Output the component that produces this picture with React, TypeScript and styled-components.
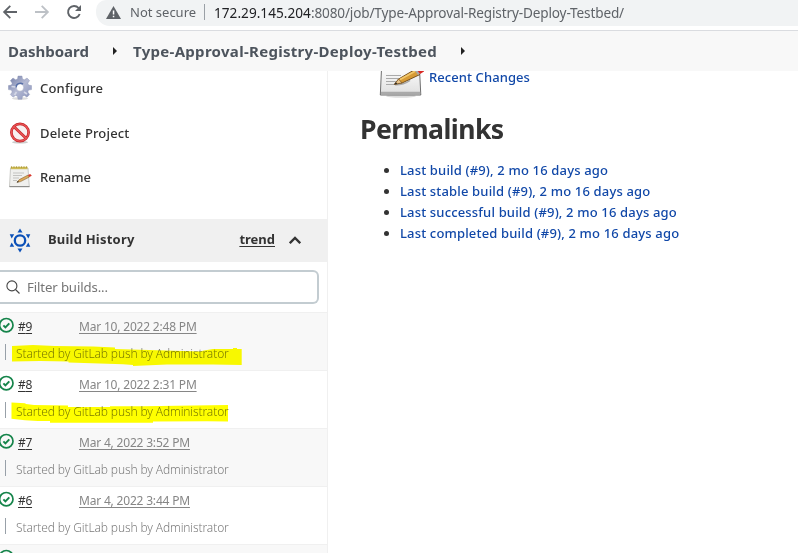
import React from 'react';
import styled, { createGlobalStyle } from 'styled-components';

const GlobalStyle = createGlobalStyle`
  * { box-sizing: border-box; }
  html, body { margin: 0; padding: 0; }
  body {
    background: #fff;
    color: #333;
    font-family: "Noto Sans", "Open Sans", sans-serif;
    font-size: 13px;
    overflow: hidden;
  }
  svg { display: block; flex: none; }
`;

const Page = styled.div`
  display: flex;
  flex-direction: column;
  width: 798px;
  height: 553px;
  overflow: hidden;
`;

const BrowserBar = styled.header`
  display: flex;
  flex: none;
  height: 31px;
  border-bottom: 1px solid #dadce0;
  background: #fff;
`;

const NavButtons = styled.div`
  display: flex;
  width: 96px;
  height: 24px;
  align-items: center;
  gap: 14px;
  padding-left: 1px;
`;

const AddressBar = styled.div`
  display: flex;
  flex: 1;
  height: 26px;
  padding: 0 0 2px 10px;
  align-items: center;
  border-radius: 10px 0 0 14px;
  background: #f1f3f4;
  color: #5f6368;
  white-space: pre;
`;

const Security = styled.span`
  width: 74px;
  margin-left: 9px;
  font-size: 13px;
`;

const Divider = styled.span`
  width: 1px;
  height: 16px;
  margin-right: 9px;
  background: #9aa0a6;
`;

const Url = styled.span`
  font-size: 13.6px;
  letter-spacing: -0.15px;
`;

const Host = styled.span`
  color: #202124;
  letter-spacing: 0.03px;
`;

const Breadcrumbs = styled.nav`
  display: flex;
  flex: none;
  align-items: center;
  height: 40px;
  padding-left: 8px;
  background: #f8f8f8;
  color: #4d545d;
  font-size: 15px;
  font-weight: 700;
`;

const Crumb = styled.span<{ $width: number; $spacing?: number }>`
  width: ${(p) => p.$width}px;
  letter-spacing: ${(p) => p.$spacing ?? 0}px;
  white-space: nowrap;
`;

const CrumbArrow = styled.svg`
  width: 4px;
  height: 8px;
  margin-right: 16px;
`;

const Body = styled.div`
  display: flex;
  flex: 1;
  min-height: 0;
`;

const SidePanel = styled.aside`
  width: 328px;
  flex: none;
  border-right: 1px solid #f0f0f0;
  overflow: hidden;
`;

const Tasks = styled.div`
  display: flex;
  flex-direction: column;
  height: 148px;
  padding: 5px 0 0 8px;
  gap: 20.5px;
`;

const Task = styled.a`
  display: flex;
  align-items: center;
  height: 24px;
  gap: 8px;
  font-weight: 500;
`;

const TaskLabel = styled.span<{ $spacing: number }>`
  letter-spacing: ${(p) => p.$spacing}px;
`;

const HistoryHeader = styled.div`
  display: flex;
  align-items: center;
  height: 43px;
  padding: 0 26px 2px 8px;
  background: #f0f0f0;
  font-weight: 700;
`;

const HistoryTitle = styled.span`
  flex: 1;
  margin-left: 16px;
  padding-bottom: 2px;
  letter-spacing: 0.21px;
`;

const TrendLink = styled.a`
  margin-right: 14px;
  padding-bottom: 2px;
  text-decoration: underline;
  text-underline-offset: 2px;
`;

const FilterArea = styled.div`
  height: 50px;
  padding: 8px 8px 8px 0;
`;

const FilterBox = styled.div`
  display: flex;
  align-items: center;
  height: 34px;
  padding-left: 6px;
  border: 2px solid #c3ccd1;
  border-left: 0;
  border-radius: 0 6px 6px 0;
  color: #757575;
`;

const Placeholder = styled.span`
  margin-left: 7px;
  font-size: 13.2px;
  letter-spacing: -0.12px;
`;

const BuildRow = styled.div<{ $shaded: boolean }>`
  position: relative;
  height: 58px;
  padding-top: 6px;
  border-top: 1px solid #f0f0f0;
  background: ${(p) => (p.$shaded ? '#f8f8f8' : '#fff')};
  font-size: 12px;
`;

const BuildLine = styled.div`
  display: flex;
  height: 16px;
  line-height: 16px;
`;

const StatusIcon = styled.svg`
  width: 16px;
  height: 16px;
  margin: -2px 4px 0 -2px;
`;

const BuildLink = styled.a`
  width: 61px;
  color: #333;
  letter-spacing: -0.3px;
  text-decoration: underline;
  text-underline-offset: 2px;
`;

const BuildDate = styled.a`
  color: #868686;
  letter-spacing: -0.19px;
  text-decoration: underline;
  text-underline-offset: 2px;
`;

const Cause = styled.div`
  height: 16px;
  margin: 9px 0 0 5px;
  padding-left: 10px;
  border-left: 1px solid #98a0a8;
  color: #7c7c7c;
  font-weight: 300;
  line-height: 20px;
  letter-spacing: -0.12px;
`;

const Marker = styled.svg`
  position: absolute;
  left: 0;
  top: 28px;
  width: 245px;
  height: 26px;
  mix-blend-mode: multiply;
`;

const Main = styled.main`
  display: flex;
  flex-direction: column;
  flex: 1;
  padding-left: 32px;
`;

const Changes = styled.div`
  display: flex;
  height: 28px;
  padding-left: 17px;
`;

const Link = styled.a<{ $spacing: number }>`
  color: #1148a8;
  font-weight: 500;
  letter-spacing: ${(p) => p.$spacing}px;
`;

const ChangesLink = styled(Link)`
  height: 12px;
  line-height: 12px;
  margin-left: 1px;
`;

const Heading = styled.h2`
  margin: 11px 0 0;
  font-size: 26.6px;
  line-height: 38px;
  letter-spacing: -0.55px;
`;

const Permalinks = styled.ul`
  margin: 12px 0 0;
  padding-left: 40px;
  line-height: 21px;
`;

function GearIcon() {
  return (
    <svg width="24" height="26" viewBox="0 0 24 26">
      <defs>
        <linearGradient id="gear" x1="0" y1="0" x2="1" y2="1">
          <stop offset="0" stopColor="#6f7ba6" />
          <stop offset="0.5" stopColor="#b5bad3" />
          <stop offset="1" stopColor="#8590ba" />
        </linearGradient>
      </defs>
      <ellipse cx="12" cy="23.6" rx="8" ry="1.4" fill="#ddd" />
      <path
        fill="url(#gear)"
        stroke="#8e96b6"
        strokeWidth="0.4"
        fillRule="evenodd"
        d="M10 1h4l.5 3 1.9.8L19 3l2.600 2.600-1.800 2.600.8 1.900 3 .5v4l-3 .5-.8 1.900 1.800 2.500-2.600 2.700-2.600-1.800-1.900.8-.5 3h-4l-.5-3-1.900-.8L5 22.200l-2.600-2.700 1.800-2.500-.8-1.900-3-.5v-4l3-.5.8-1.900-1.800-2.600L5 3l2.600 1.800 1.900-.8zM12 8.800a3.700 3.700 0 1 0 0 7.400 3.700 3.700 0 0 0 0-7.400z"
      />
      <path d="M8 12.500a4.300 4.300 0 0 1 7-3.300" fill="none" stroke="#5870a8" strokeWidth="1.500" />
      <path d="M3.500 11.500l4 .5M6.500 20l2-3M16 17l3 2" stroke="#d5d8e7" strokeWidth="1.600" />
    </svg>
  );
}

function DeleteIcon() {
  return (
    <svg width="24" height="24" viewBox="0 0 24 24">
      <ellipse cx="12" cy="21.200" rx="8" ry="1.400" fill="#ccc" />
      <circle cx="12" cy="11.500" r="8.600" fill="#f8f0f0" stroke="#c4262a" strokeWidth="2.700" />
      <path d="M6 5.800l12 11.400" stroke="#c4262a" strokeWidth="2.900" />
      <circle cx="12" cy="11.500" r="8.600" fill="none" stroke="#ea5355" strokeWidth="1.300" />
      <path d="M6 5.800l12 11.400" stroke="#ea5355" strokeWidth="1.500" />
    </svg>
  );
}

function RenameIcon() {
  return (
    <svg width="24" height="24" viewBox="0 0 24 24">
      <path d="M2.500 3h17.500l1.300 18.500H1.500z" fill="#f0f0ee" stroke="#b5b5b0" strokeWidth="0.700" />
      <path d="M1.500 21h20v1.200H1.500z" fill="#8d8d8b" />
      <path d="M2.800 1.800h16.700v2.400H2.800z" fill="#cdbb56" />
      <path d="M3.500 1.400v1.500M6 1.400v1.500M8.500 1.400v1.500M11 1.400v1.500M13.500 1.400v1.500M16 1.400v1.500M18.500 1.400v1.500" stroke="#ae9a3c" />
      <path d="M5 8h11M5 10.500h9M5 13h6M5 15.500h4" stroke="#c3c3c1" />
      <path d="M9 17.300l2.300-2.700 8.700-4.500 1.300 2-8.700 4.500z" fill="#dda95a" stroke="#8a6431" strokeWidth="0.600" />
      <path d="M20 10l2.200-1.100 1.600 1.800-2.500 1.400z" fill="#d8372c" />
      <path d="M8.800 17.400l1-1.400 1.200 1z" fill="#222" />
    </svg>
  );
}

function ChangesIcon() {
  return (
    <svg width="51" height="28" viewBox="0 0 51 28">
      <defs>
        <linearGradient id="page" x1="0" y1="0" x2="0" y2="1">
          <stop offset="0" stopColor="#fcfcfc" />
          <stop offset="1" stopColor="#dedede" />
        </linearGradient>
      </defs>
      <ellipse cx="24" cy="25" rx="15" ry="1.800" fill="#ddd" />
      <path d="M4.500-2h38l1.300 26H3.300z" fill="url(#page)" stroke="#6f6f6f" />
      <path d="M4 20.800h39.200v2.200H4z" fill="#aaa" />
      <path d="M9 4.500h15M9 7.500h13M9 10.500h11M9 13.500h9" stroke="#aaa" />
      <path d="M18 13.800c5 .2 10-1 15-4.500" stroke="#aaa" strokeWidth="1.500" fill="none" />
      <path d="M17.500 13.300l4-5.200L37-1l6 4.500-17.800 8.400z" fill="#d79b36" stroke="#6b4719" strokeWidth="0.900" />
      <path d="M23 8.500L38.500 0" stroke="#f2c86b" strokeWidth="1.700" />
      <path d="M17.500 13.300l4-5.200 3.500 3.800z" fill="#e9c58b" stroke="#6b4719" strokeWidth="0.600" />
      <path d="M17.500 13.300l1.500-2.100 1.300 1.500z" fill="#222" />
      <path d="M37-1.500l4 5.500 2.500-1.500L40-2z" fill="#aaa" />
      <path d="M40-1l3 4 4-2.500V-1z" fill="#d92a25" />
    </svg>
  );
}

function BuildHistoryIcon() {
  return (
    <svg width="24" height="26" viewBox="0 0 24 26" fill="#0b50b8">
      <circle cx="12" cy="13.500" r="5.200" fill="none" stroke="#0b50b8" strokeWidth="2.300" />
      <path d="M12 1.500l2.500 4H9.500zM12 25.500l2.500-4H9.500z" />
      <path d="M1.700 7.300h4.500l-2.500 4.200zM22.300 7.300h-4.500l2.500 4.200zM1.700 19.700h4.500l-2.500-4.200zM22.300 19.700h-4.500l2.500-4.200z" />
    </svg>
  );
}

function SuccessIcon() {
  return (
    <StatusIcon viewBox="0 0 16 16" fill="none" stroke="#15844a">
      <circle cx="8.300" cy="8.200" r="6.700" strokeWidth="1.700" />
      <path d="M5.400 8.400l2 2 3.900-4" strokeWidth="2" />
    </StatusIcon>
  );
}

const CaretRight = () => (
  <CrumbArrow viewBox="0 0 4 8">
    <path d="M0 0l4 4-4 4z" fill="#222" />
  </CrumbArrow>
);

const markers = {
  upper:
    '12,5 33,4 55,5 93,5.500 115,6.500 115,8 200,10.500 204,9.500 213,8 233,8 233,7 237,7 237,8 241.700,8 241.700,24 213,23.600 167,23.600 133,25 133,24 123,23.200 68.500,21.500 68.500,20.500 40,20 12,20.500',
  lower:
    '11.500,3.500 25,4.200 26,5 34,6 50,6.200 68,6.500 68,8 110,8 110,7.300 143,7.300 228,6 228,22.500 207,22.300 153,22.500 153,23.700 50,23.700 50,22 38,22 25,21.300 11.500,19.700',
};

type Build = { id: number; date: string; marker?: string };

const builds: Build[] = [
  { id: 9, date: 'Mar 10, 2022 2:48 PM', marker: markers.upper },
  { id: 8, date: 'Mar 10, 2022 2:31 PM', marker: markers.lower },
  { id: 7, date: 'Mar 4, 2022 3:52 PM' },
  { id: 6, date: 'Mar 4, 2022 3:44 PM' },
];

const permalinks = ['build', 'stable build', 'successful build', 'completed build'];

export default function App() {
  return (
    <Page>
      <GlobalStyle />
      <BrowserBar>
        <NavButtons>
          <svg width="18" height="16" viewBox="0 0 18 16" fill="none" stroke="#5f6368" strokeWidth="1.800">
            <path d="M16 8H3.500M9.300 1.800L3.100 8l6.200 6.200" />
          </svg>
          <svg width="18" height="16" viewBox="0 0 18 16" fill="none" stroke="#bdc1c6" strokeWidth="1.800">
            <path d="M2 8h12.500M8.700 1.800L14.900 8l-6.200 6.200" />
          </svg>
          <svg width="18" height="16" viewBox="0 0 18 16" fill="none" stroke="#5f6368" strokeWidth="1.900">
            <path d="M13.600 4A6 6 0 1 0 14.700 10" />
            <path d="M16 1v6h-6z" fill="#5f6368" stroke="none" />
          </svg>
        </NavButtons>
        <AddressBar>
          <svg width="15" height="13" viewBox="0 0 15 13">
            <path d="M7.500 0L15 13H0z" fill="#5f6368" />
            <path d="M6.800 4.500h1.500v4H6.800zM6.800 9.700h1.500v1.500H6.800z" fill="#fff" />
          </svg>
          <Security>Not secure</Security>
          <Divider />
          <Url>
            <Host>172.29.145.204</Host>:8080/job/Type-Approval-Registry-Deploy-Testbed/
          </Url>
        </AddressBar>
      </BrowserBar>
      <Breadcrumbs>
        <Crumb $width={105}>Dashboard</Crumb>
        <CaretRight />
        <Crumb $width={328} $spacing={0.3}>
          Type-Approval-Registry-Deploy-Testbed
        </Crumb>
        <CaretRight />
      </Breadcrumbs>
      <Body>
        <SidePanel>
          <Tasks>
            <Task>
              <GearIcon />
              <TaskLabel $spacing={0.18}>Configure</TaskLabel>
            </Task>
            <Task>
              <DeleteIcon />
              <TaskLabel $spacing={0.16}>Delete Project</TaskLabel>
            </Task>
            <Task>
              <RenameIcon />
              <TaskLabel $spacing={0}>Rename</TaskLabel>
            </Task>
          </Tasks>
          <HistoryHeader>
            <BuildHistoryIcon />
            <HistoryTitle>Build History</HistoryTitle>
            <TrendLink>trend</TrendLink>
            <svg width="12" height="8" viewBox="0 0 12 8" fill="none" stroke="#333" strokeWidth="2.300">
              <path d="M.8 7.200L6 2l5.200 5.200" />
            </svg>
          </HistoryHeader>
          <FilterArea>
            <FilterBox>
              <svg width="14" height="14" viewBox="0 0 14 14" fill="none" stroke="#444" strokeWidth="1.100">
                <circle cx="5.900" cy="5.900" r="5" />
                <path d="M9.500 9.500l4 4" />
              </svg>
              <Placeholder>Filter builds...</Placeholder>
            </FilterBox>
          </FilterArea>
          {builds.map((b, i) => (
            <BuildRow key={b.id} $shaded={i % 2 === 0}>
              <BuildLine>
                <SuccessIcon />
                <BuildLink>#{b.id}</BuildLink>
                <BuildDate>{b.date}</BuildDate>
              </BuildLine>
              <Cause>Started by GitLab push by Administrator</Cause>
              {b.marker && (
                <Marker viewBox="0 0 245 26">
                  <polygon points={b.marker} fill="#ffff00" />
                </Marker>
              )}
            </BuildRow>
          ))}
          <BuildRow $shaded>
            <BuildLine>
              <SuccessIcon />
            </BuildLine>
          </BuildRow>
        </SidePanel>
        <Main>
          <Changes>
            <ChangesIcon />
            <ChangesLink $spacing={0.08}>Recent Changes</ChangesLink>
          </Changes>
          <Heading>Permalinks</Heading>
          <Permalinks>
            {permalinks.map((name) => (
              <li key={name}>
                <Link $spacing={0.16}>Last {name} (#9), 2 mo 16 days ago</Link>
              </li>
            ))}
          </Permalinks>
        </Main>
      </Body>
    </Page>
  );
}
